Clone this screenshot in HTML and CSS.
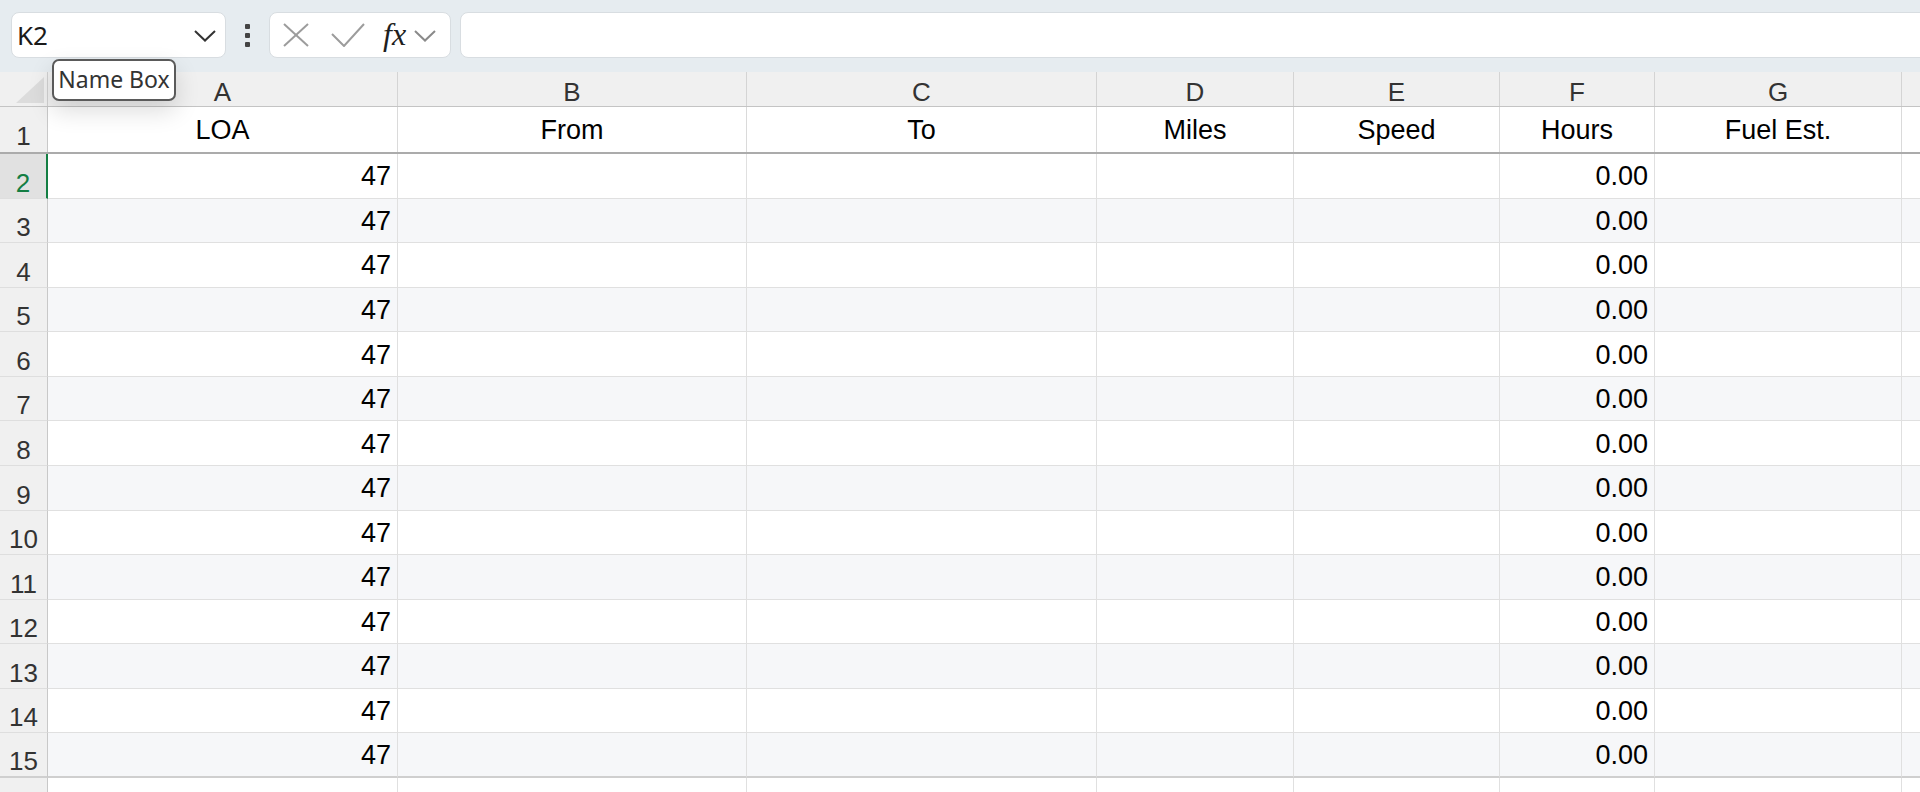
FILE: index.html
```html
<!DOCTYPE html>
<html lang="en">
<head>
<meta charset="utf-8">
<title>Sheet</title>
<link rel="stylesheet" href="styles.css">
</head>
<body>
<div class="app">
  <div class="toolbar">
    <div class="namebox">
      <span class="nb-text">K2</span>
      <svg class="nb-chev" width="22" height="12" viewBox="0 0 22 12"><polyline points="1,1 11,10.5 21,1" fill="none" stroke="#333" stroke-width="2"/></svg>
    </div>
    <div class="dots"><span></span><span></span><span></span></div>
    <div class="fbtns">
      <svg class="ic-x" width="26" height="24" viewBox="0 0 26 24"><line x1="1" y1="1" x2="25" y2="23" stroke="#9c9c9c" stroke-width="2"/><line x1="25" y1="1" x2="1" y2="23" stroke="#9c9c9c" stroke-width="2"/></svg>
      <svg class="ic-check" width="34" height="24" viewBox="0 0 34 24"><polyline points="1,11 13,23 33,1" fill="none" stroke="#9c9c9c" stroke-width="2"/></svg>
      <span class="fx">fx</span>
      <svg class="fx-chev" width="22" height="12" viewBox="0 0 22 12"><polyline points="1,1 11,10.5 21,1" fill="none" stroke="#8a8a8a" stroke-width="2"/></svg>
    </div>
    <div class="finput"></div>
  </div>

  <div class="sheet">
    <div class="row hdr">
      <div class="corner"><span class="tri"></span></div>
      <div class="ch">A</div><div class="ch">B</div><div class="ch">C</div><div class="ch">D</div><div class="ch">E</div><div class="ch">F</div><div class="ch">G</div><div class="ch last"></div>
    </div>
    <div class="row r1">
      <div class="rh">1</div>
      <div class="c ctr">LOA</div><div class="c ctr">From</div><div class="c ctr">To</div><div class="c ctr">Miles</div><div class="c ctr">Speed</div><div class="c ctr">Hours</div><div class="c ctr">Fuel Est.</div><div class="c last"></div>
    </div>
    <div class="row d sel"><div class="rh">2</div><div class="c num">47</div><div class="c"></div><div class="c"></div><div class="c"></div><div class="c"></div><div class="c num">0.00</div><div class="c"></div><div class="c last"></div></div>
    <div class="row d alt"><div class="rh">3</div><div class="c num">47</div><div class="c"></div><div class="c"></div><div class="c"></div><div class="c"></div><div class="c num">0.00</div><div class="c"></div><div class="c last"></div></div>
    <div class="row d"><div class="rh">4</div><div class="c num">47</div><div class="c"></div><div class="c"></div><div class="c"></div><div class="c"></div><div class="c num">0.00</div><div class="c"></div><div class="c last"></div></div>
    <div class="row d alt"><div class="rh">5</div><div class="c num">47</div><div class="c"></div><div class="c"></div><div class="c"></div><div class="c"></div><div class="c num">0.00</div><div class="c"></div><div class="c last"></div></div>
    <div class="row d"><div class="rh">6</div><div class="c num">47</div><div class="c"></div><div class="c"></div><div class="c"></div><div class="c"></div><div class="c num">0.00</div><div class="c"></div><div class="c last"></div></div>
    <div class="row d alt"><div class="rh">7</div><div class="c num">47</div><div class="c"></div><div class="c"></div><div class="c"></div><div class="c"></div><div class="c num">0.00</div><div class="c"></div><div class="c last"></div></div>
    <div class="row d"><div class="rh">8</div><div class="c num">47</div><div class="c"></div><div class="c"></div><div class="c"></div><div class="c"></div><div class="c num">0.00</div><div class="c"></div><div class="c last"></div></div>
    <div class="row d alt"><div class="rh">9</div><div class="c num">47</div><div class="c"></div><div class="c"></div><div class="c"></div><div class="c"></div><div class="c num">0.00</div><div class="c"></div><div class="c last"></div></div>
    <div class="row d"><div class="rh">10</div><div class="c num">47</div><div class="c"></div><div class="c"></div><div class="c"></div><div class="c"></div><div class="c num">0.00</div><div class="c"></div><div class="c last"></div></div>
    <div class="row d alt"><div class="rh">11</div><div class="c num">47</div><div class="c"></div><div class="c"></div><div class="c"></div><div class="c"></div><div class="c num">0.00</div><div class="c"></div><div class="c last"></div></div>
    <div class="row d"><div class="rh">12</div><div class="c num">47</div><div class="c"></div><div class="c"></div><div class="c"></div><div class="c"></div><div class="c num">0.00</div><div class="c"></div><div class="c last"></div></div>
    <div class="row d alt"><div class="rh">13</div><div class="c num">47</div><div class="c"></div><div class="c"></div><div class="c"></div><div class="c"></div><div class="c num">0.00</div><div class="c"></div><div class="c last"></div></div>
    <div class="row d"><div class="rh">14</div><div class="c num">47</div><div class="c"></div><div class="c"></div><div class="c"></div><div class="c"></div><div class="c num">0.00</div><div class="c"></div><div class="c last"></div></div>
    <div class="row d alt lastrow"><div class="rh">15</div><div class="c num">47</div><div class="c"></div><div class="c"></div><div class="c"></div><div class="c"></div><div class="c num">0.00</div><div class="c"></div><div class="c last"></div></div>
    <div class="row d"><div class="rh"></div><div class="c"></div><div class="c"></div><div class="c"></div><div class="c"></div><div class="c"></div><div class="c"></div><div class="c"></div><div class="c last"></div></div>
  </div>

  <div class="tooltip">Name Box</div>
</div>
</body>
</html>
```

FILE: styles.css
```css
* { box-sizing: border-box; }
html, body { margin: 0; padding: 0; }
body {
  width: 1920px;
  height: 792px;
  overflow: hidden;
  background: #ffffff;
  font-family: "Liberation Sans", Arial, sans-serif;
  color: #000;
}
.app { position: relative; width: 1920px; height: 792px; overflow: hidden; }

/* toolbar */
.toolbar {
  height: 72px;
  background: #e6ecf0;
  display: flex;
  align-items: flex-start;
  padding: 12px 0 0 11px;
  overflow: hidden;
}
.namebox {
  width: 215px;
  height: 46px;
  background: #fff;
  border: 1px solid #d8dde1;
  border-radius: 8px;
  display: flex;
  align-items: center;
  justify-content: space-between;
  padding: 0 9px 0 5px;
}
.nb-text {
  font-family: "Noto Sans", "Open Sans", sans-serif;
  font-size: 26px;
  color: #1a1a1a;
  line-height: 1;
  margin-top: -1px;
}
.nb-chev { display: block; margin-top: 2px; }
.dots {
  width: 43px;
  height: 46px;
  display: flex;
  flex-direction: column;
  align-items: center;
  justify-content: center;
  gap: 4px;
}
.dots span { width: 5px; height: 5px; background: #444; border-radius: 1px; }
.fbtns {
  width: 182px;
  height: 46px;
  background: #fff;
  border: 1px solid #d8dde1;
  border-radius: 8px;
  display: flex;
  align-items: center;
  padding-left: 13px;
}
.ic-x { display: block; }
.ic-check { display: block; margin-left: 22px; }
.fx {
  font-family: "Liberation Serif", "Times New Roman", serif;
  font-style: italic;
  font-size: 32px;
  color: #1e1e1e;
  margin-left: 18px;
  line-height: 1;
  margin-top: -2px;
}
.fx-chev { display: block; margin-left: 8px; margin-top: 2px; }
.finput {
  flex: 1;
  height: 46px;
  margin-left: 9px;
  margin-right: -20px;
  background: #fff;
  border: 1px solid #d8dde1;
  border-radius: 8px;
}

/* sheet */
.sheet { width: 1920px; }
.row {
  display: grid;
  grid-template-columns: 48px 350px 349px 350px 197px 206px 155px 247px 1fr;
}
.hdr { height: 35px; background: #f0f0f0; border-bottom: 1px solid #c4c4c4; }
.corner { position: relative; border-right: 1px solid #d0d0d0; }
.tri {
  position: absolute;
  right: 3px;
  bottom: 3px;
  width: 0; height: 0;
  border-left: 28px solid transparent;
  border-bottom: 26px solid #dcdcdc;
}
.ch {
  display: flex;
  align-items: flex-end;
  justify-content: center;
  font-size: 26px;
  line-height: 26px;
  color: #333;
  padding-bottom: 1px;
  border-right: 1px solid #d4d4d4;
  padding-top: 5px;
}
.ch.last { border-right: none; }

.r1 { height: 47px; border-bottom: 2px solid #ababab; }
.d { height: 44.5714px; }
.rh {
  background: #f0f0f0;
  border-right: 1px solid #c8c8c8;
  border-bottom: 1px solid #dedede;
  display: flex;
  align-items: flex-end;
  justify-content: center;
  font-size: 26px;
  line-height: 26px;
  color: #333;
  padding-bottom: 2px;
}
.r1 .rh { border-bottom: none; padding-bottom: 3px; }
.c {
  border-right: 1px solid #e0e0e0;
  border-bottom: 1px solid #e0e0e0;
  display: flex;
  align-items: center;
  font-size: 27px;
  line-height: 27px;
  color: #000;
  overflow: hidden;
  white-space: nowrap;
}
.c.last { border-right: none; }
.r1 .c { border-bottom: none; border-right-color: #dadada; }
.ctr { justify-content: center; padding-top: 1px; }
.num { justify-content: flex-end; padding-right: 6px; padding-top: 2px; }
.alt .c { background: #f6f7f9; }
.sel .rh {
  background: #e1e1e1;
  color: #137e43;
  border-right: 2px solid #137e43;
}
.lastrow .c, .lastrow .rh { border-bottom: 2px solid #cfcfcf; }

/* tooltip */
.tooltip {
  position: absolute;
  left: 52px;
  top: 59px;
  width: 124px;
  height: 42px;
  background: #fff;
  border: 2px solid #5a5a5a;
  border-radius: 7px;
  font-family: "Noto Sans", "Open Sans", sans-serif;
  font-size: 23px;
  line-height: 1;
  color: #333;
  display: flex;
  align-items: center;
  justify-content: center;
  padding-bottom: 2px;
  box-shadow: 0 10px 24px rgba(0, 0, 0, 0.14);
  white-space: nowrap;
}
```
